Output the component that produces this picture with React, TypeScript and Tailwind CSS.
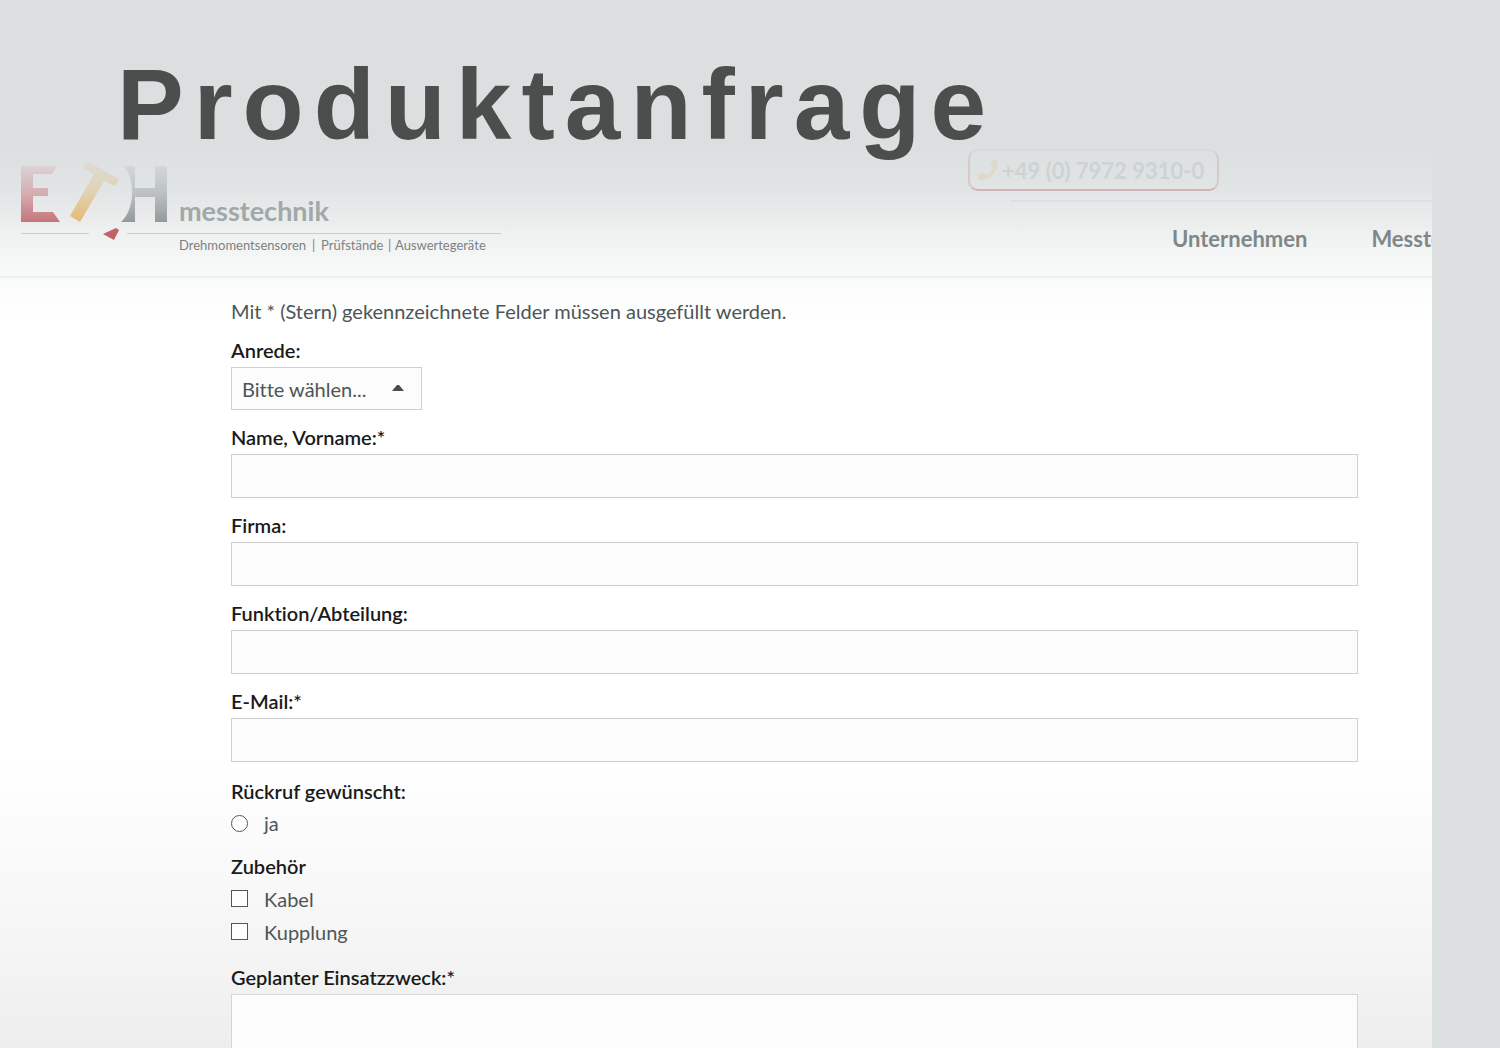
import { FaPhone } from "react-icons/fa";

const fields = [
  { id: "name", label: "Name, Vorname:*", type: "text" },
  { id: "company", label: "Firma:", type: "text" },
  { id: "department", label: "Funktion/Abteilung:", type: "text" },
  { id: "email", label: "E-Mail:*", type: "email" },
];

const accessories = ["Kabel", "Kupplung"];

function Logo() {
  return (
    <svg
      viewBox="0 0 482 98"
      className="mt-[11px] ml-5 h-[98px] w-[482px] shrink-0"
      role="img"
      aria-label="ETH messtechnik"
    >
      <defs>
        <linearGradient id="red" gradientUnits="userSpaceOnUse" x1="0" y1="6" x2="0" y2="62">
          <stop offset="0" stopColor="#dbd2d4" />
          <stop offset="0.5" stopColor="#d5acb0" />
          <stop offset="1" stopColor="#c5757b" />
        </linearGradient>
        <linearGradient id="orange" gradientUnits="userSpaceOnUse" x1="0" y1="2" x2="0" y2="62">
          <stop offset="0" stopColor="#dddcd5" />
          <stop offset="0.5" stopColor="#e1d1b4" />
          <stop offset="1" stopColor="#e7b973" />
        </linearGradient>
        <linearGradient id="gray" gradientUnits="userSpaceOnUse" x1="0" y1="6" x2="0" y2="62">
          <stop offset="0" stopColor="#d3d7d8" />
          <stop offset="0.5" stopColor="#bbc1c1" />
          <stop offset="1" stopColor="#939b9a" />
        </linearGradient>
      </defs>
      <path fill="url(#red)" d="M1 6H37L32 14H13V28H28V36H13V52H33L40 62H1Z" />
      <path fill="url(#orange)" d="M67 1L99 19L95 26L84 21L60 62L50 56L74 14L63 8Z" />
      <path
        fill="url(#gray)"
        d="M103 6H115V28H135V6H147V62H135V37H115V62H101C109 54 112 44 112 32C112 20 109 11 103 6Z"
      />
      <path fill="#c16269" d="M83 74L96 68L99 70L94 80Z" />
      <path stroke="#cbcecf" strokeWidth="1" d="M1 73.5H69M107 73.5H481" />
      <text
        x="159"
        y="61"
        fill="#a1a8a8"
        className="font-['Lato',sans-serif] text-[27px] font-bold"
      >
        messtechnik
      </text>
      <g fill="#7b8282" className="font-['Lato',sans-serif] text-[13px]">
        <text x="159" y="90">Drehmomentsensoren</text>
        <text x="292" y="90">|</text>
        <text x="301" y="90">Prüfstände</text>
        <text x="368" y="90">|</text>
        <text x="375" y="90">Auswertegeräte</text>
      </g>
    </svg>
  );
}

function Header() {
  return (
    <header className="flex h-[129px] justify-between border-b-2 border-[#edf0ef]">
      <Logo />
      <div className="w-[464px] shrink-0">
        <a
          href="tel:+49797293100"
          className="flex h-[42px] w-[251px] items-center gap-1 rounded-[10px] border-2 border-x-[#d7c8ca] border-t-[#dad7d9] border-b-[#d4b3b7] pl-2 text-[22px] font-bold whitespace-nowrap text-[#cdd2d3]"
        >
          <FaPhone className="size-5 shrink-0 text-[#dfd9cb]" />
          +49 (0) 7972 9310-0
        </a>
        <div className="mt-[9px] ml-[42px] h-[2px] bg-[#dde0e1]" />
        <nav className="mt-5 flex gap-16 overflow-hidden pl-[204px] text-[22px] font-bold whitespace-nowrap text-[#7f8787]">
          <a href="#unternehmen">Unternehmen</a>
          <a href="#messtechnik">Messtechnik</a>
        </nav>
      </div>
    </header>
  );
}

export default function App() {
  return (
    <div className="min-h-screen bg-[#dbdfe0] pr-[68px] font-['Lato',sans-serif] text-[#4d5556] [font-variant-ligatures:none]">
      <main className="flex min-h-screen flex-col overflow-hidden bg-[linear-gradient(#dbdfe0_0px,#dbdfe0_140px,#dfe3e3_180px,#e6e8e9_205px,#eeefef_230px,#f9fbfa_275px,#ffffff_325px,#ffffff_760px,#f7f7f7_910px,#eeeeee_1048px)]">
        <h1 className="pt-[59px] pl-[117px] font-['Liberation_Sans',Arial,sans-serif] text-[100px] leading-[90px] font-bold tracking-widest text-[#4c4e4d]">
          Produktanfrage
        </h1>
        <Header />

        <form className="flex grow flex-col gap-[15px] pt-[21px] pr-[74px] pl-[231px] text-xl leading-6">
          <p>Mit * (Stern) gekennzeichnete Felder müssen ausgefüllt werden.</p>

          <div className="flex flex-col gap-[5px]">
            <label htmlFor="salutation" className="font-semibold text-[#1a1a1a]">
              Anrede:
            </label>
            <div className="relative w-[191px]">
              <select
                id="salutation"
                className="block h-[43px] w-full appearance-none border border-[#cfcfcf] bg-[#fcfcfc] px-[10px]"
              >
                <option>Bitte wählen...</option>
                <option>Frau</option>
                <option>Herr</option>
              </select>
              <svg
                viewBox="0 0 12 6"
                className="pointer-events-none absolute top-[18px] right-[18px] h-[6px] w-3 fill-[#454d4d]"
              >
                <path d="M0 6L5 0H7L12 6Z" />
              </svg>
            </div>
          </div>

          {fields.map((field) => (
            <div key={field.id} className="flex flex-col gap-[5px]">
              <label htmlFor={field.id} className="font-semibold text-[#1a1a1a]">
                {field.label}
              </label>
              <input
                id={field.id}
                type={field.type}
                className="h-11 w-full border border-[#cfcfcf] bg-[#fcfcfc] px-[10px]"
              />
            </div>
          ))}

          <fieldset className="mt-0.5">
            <legend className="mb-1 font-semibold text-[#1a1a1a]">Rückruf gewünscht:</legend>
            <label className="flex h-8 items-center gap-4">
              <input
                type="radio"
                name="callback"
                className="size-[17px] appearance-none rounded-full border border-[#555555] bg-white checked:bg-[#555555]"
              />
              ja
            </label>
          </fieldset>

          <fieldset>
            <legend className="mb-1 font-semibold text-[#1a1a1a]">Zubehör</legend>
            {accessories.map((name) => (
              <label key={name} className="flex h-[33px] items-center gap-4">
                <input
                  type="checkbox"
                  className="size-[17px] appearance-none border border-[#555555] bg-white checked:bg-[#555555]"
                />
                {name}
              </label>
            ))}
          </fieldset>

          <div className="mt-0.5 flex grow flex-col gap-[5px]">
            <label htmlFor="purpose" className="font-semibold text-[#1a1a1a]">
              Geplanter Einsatzzweck:*
            </label>
            <textarea
              id="purpose"
              className="w-full grow resize-none border border-b-0 border-[#d5d5d5] bg-[#fcfcfc] p-[10px]"
            />
          </div>
        </form>
      </main>
    </div>
  );
}
